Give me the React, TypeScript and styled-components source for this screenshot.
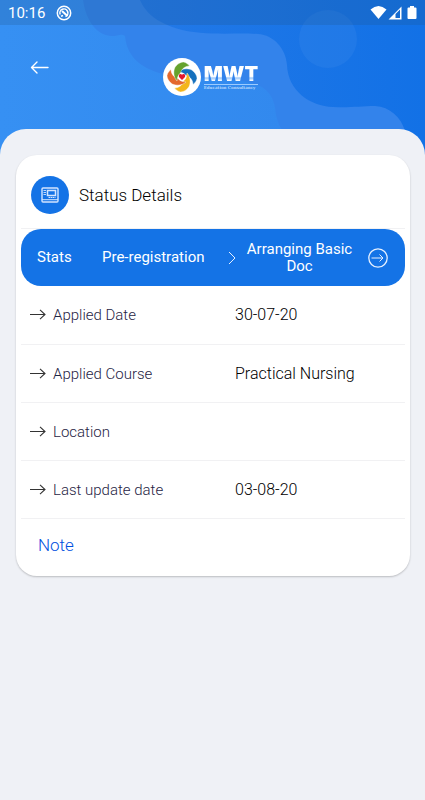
import React from "react";
import styled, { createGlobalStyle } from "styled-components";

const GlobalStyle = createGlobalStyle`
  *, *::before, *::after { box-sizing: border-box; }
  body {
    margin: 0;
    background: #eff1f6;
    font-family: Roboto, "Liberation Sans", sans-serif;
    color: #000;
  }
  button { padding: 0; border: 0; background: none; color: inherit; font: inherit; cursor: pointer; }
  svg { display: block; }
`;

const Screen = styled.div`
  min-height: 100vh;
  background: #eff1f6;
`;

const Hero = styled.header`
  position: relative;
  isolation: isolate;
  overflow: hidden;
  padding-bottom: 57px;
  color: #fff;
`;

const Backdrop = styled.svg`
  position: absolute;
  inset: 0;
  z-index: -1;
  width: 100%;
  height: 100%;
`;

const StatusBar = styled.div`
  display: flex;
  align-items: center;
  height: 25px;
  padding: 0 6px 0 8px;
  background: rgba(30, 80, 130, 0.22);
`;

const Clock = styled.time`
  margin-right: 11px;
  font-size: 15px;
  line-height: 18px;
`;

const SystemIcons = styled.div`
  display: flex;
  align-items: center;
  gap: 1px;
  margin-left: auto;
`;

const NavBar = styled.nav`
  display: grid;
  grid-template-columns: 1fr auto 1fr;
  align-items: start;
  height: 104px;
  padding: 32px 34px 0 30px;
`;

const BackButton = styled.button`
  width: 20px;
  height: 20px;
`;

const Brand = styled.div`
  display: flex;
  align-items: center;
  gap: 3px;
  padding-top: 1px;
`;

const BrandText = styled.div`
  display: flex;
  flex-direction: column;
`;

const BrandName = styled.strong`
  border-bottom: 1px solid #9ccbff;
  background: linear-gradient(#fff 62%, #9cc8fb 70%, #fff 84%);
  background-clip: text;
  -webkit-text-fill-color: transparent;
  font-family: Inter, sans-serif;
  font-size: 20px;
  font-weight: 900;
  line-height: 20px;
`;

const BrandTagline = styled.span`
  color: #b5d6fb;
  font-family: "DejaVu Serif", serif;
  font-size: 4px;
  font-weight: 700;
  line-height: 6px;
`;

const Sheet = styled.main`
  position: relative;
  margin-top: -57px;
  padding: 26px 15px 32px 16px;
  border-radius: 26px 26px 0 0;
  background: #eff1f6;
`;

const Card = styled.section`
  padding: 0 5px;
  border-radius: 21px;
  background: #fff;
  box-shadow: 0 1px 2px rgba(0, 0, 0, 0.22);
`;

const CardHeader = styled.div`
  display: flex;
  align-items: center;
  gap: 10px;
  height: 74px;
  padding: 6px 10px 0;
  border-bottom: 1px solid #f1f1f3;
`;

const RoundBadge = styled.div`
  display: grid;
  place-items: center;
  width: 38px;
  height: 38px;
  border-radius: 50%;
  background: #1473e6;
`;

const Title = styled.h1`
  margin: 0;
  font-size: 17px;
  font-weight: 300;
  line-height: 20px;
`;

const StageBar = styled.div`
  display: grid;
  grid-template-columns: 65px minmax(0, 126fr) 8px minmax(0, 132fr) 20px;
  align-items: center;
  height: 57px;
  padding: 0 17px 0 16px;
  border-radius: 20px;
  background: #1473e6;
  color: #fff;
  font-size: 15px;
  line-height: 17px;
`;

const Stage = styled.span<{ $centered?: boolean }>`
  padding: ${({ $centered }) => ($centered ? "0 13px 0 8px" : "0")};
  text-align: ${({ $centered }) => ($centered ? "center" : "left")};
`;

const NextButton = styled.button`
  width: 20px;
  height: 20px;
`;

const Details = styled.dl`
  margin: 0;
`;

const DetailRow = styled.div`
  display: grid;
  grid-template-columns: 205fr 161fr;
  align-items: center;
  height: 58px;
  padding: 0 9px;
  border-bottom: 1px solid #f1f1f3;

  &:first-child { height: 59px; }
`;

const Label = styled.dt`
  display: flex;
  align-items: center;
  gap: 7px;
  color: #1f2444;
  font-size: 15px;
  font-weight: 300;
  line-height: 18px;
`;

const Value = styled.dd`
  margin: 0;
  font-size: 16px;
  font-weight: 300;
  line-height: 18px;
`;

const NoteRow = styled.div`
  height: 57px;
  padding: 16px 17px 0;
`;

const NoteLink = styled.a`
  color: #0050e0;
  font-size: 17px;
  font-weight: 300;
  line-height: 20px;
  text-decoration: none;
`;

const rows = [
  { label: "Applied Date", value: "30-07-20" },
  { label: "Applied Course", value: "Practical Nursing" },
  { label: "Location", value: "" },
  { label: "Last update date", value: "03-08-20" },
];

const Waves = () => (
  <Backdrop viewBox="0 0 425 186" preserveAspectRatio="none" aria-hidden="true">
    <defs>
      <linearGradient id="deep" x1="0" y1="0" x2="1" y2="0">
        <stop offset="0.3" stopColor="#2379e7" />
        <stop offset="1" stopColor="#1271e6" />
      </linearGradient>
      <linearGradient id="light" x1="0" y1="0" x2="1" y2="0">
        <stop offset="0" stopColor="#3690f3" />
        <stop offset="1" stopColor="#3289ee" />
      </linearGradient>
    </defs>
    <rect width="425" height="186" fill="url(#deep)" />
    <path
      d="M0 0H140C149 22 178 33 213 33.500C230 34 243 33 258 34C274 35 286 49 287 65C288 91 310 106 333 107C350 108 360 106 375 106C390 107 401 117 405 131V186H0Z"
      fill="#3383eb"
    />
    <path
      d="M0 0H83C86 22 98 36 112 36C118 36 121 33 125 36C127 60 146 72 174 76C205 80 244 77 262 87C274 95 275 106 276 115C278 123 280 128 284 132V186H0Z"
      fill="url(#light)"
    />
    <circle cx="328" cy="39" r="29" fill="#fff" opacity="0.045" />
  </Backdrop>
);

const NotificationIcon = () => (
  <svg width="16" height="16" viewBox="0 0 16 16" fill="none" stroke="#fff" aria-hidden="true">
    <circle cx="8" cy="8" r="6.700" strokeWidth="1.500" />
    <path d="M4.200 9.500A4 4 0 1 1 9.500 11.600M5 11.300 7 10.500" strokeWidth="1.500" />
    <path d="m6 6 5.500 5" strokeWidth="2" />
  </svg>
);

const WifiIcon = () => (
  <svg width="17" height="15" viewBox="0 0 17 15" aria-label="Wi-Fi" role="img">
    <path d="M.5 4.500Q8.500-2.500 16.500 4.500L8.500 14Z" fill="#fff" />
  </svg>
);

const SignalIcon = () => (
  <svg width="16" height="14" viewBox="0 0 16 14" aria-label="Mobile signal" role="img">
    <path fill="#fff" fillRule="evenodd" d="M13.500.5V13.500H.5ZM7.500 8V12H12V3.500Z" />
  </svg>
);

const BatteryIcon = () => (
  <svg width="14" height="15" viewBox="0 0 14 15" aria-label="Battery" role="img">
    <path d="M5 2.500V1h4v1.500h1.500q1 0 1 1V13q0 1-1 1h-7q-1 0-1-1V3.500q0-1 1-1Z" fill="#fff" />
  </svg>
);

const BackIcon = () => (
  <svg width="20" height="20" viewBox="0 0 20 20" fill="none" stroke="#fff" strokeWidth="1.400" strokeLinecap="round" strokeLinejoin="round" aria-hidden="true">
    <path d="M18 10.500H1.500M7 5 1.500 10.500 7 16" />
  </svg>
);

const petals = [
  { color: "#1570bd", turn: 0 },
  { color: "#f3b61b", turn: 90 },
  { color: "#e4682d", turn: 180 },
  { color: "#66a22d", turn: 270 },
];

const Emblem = () => (
  <svg width="38" height="38" viewBox="-19 -19 38 38" aria-hidden="true">
    <circle r="19" fill="#fff" />
    {petals.map(({ color, turn }) => (
      <path
        key={turn}
        transform={`rotate(${turn})`}
        d="M-4-5C0-9 8-9 11-6 14-3.500 15-.500 15 1.500 14.500 4 13 6 11 7.500 11 3 8-.500 4-1.500 2-4-1-5-4-5Z"
        fill={color}
        stroke="#fff"
        strokeWidth="0.400"
      />
    ))}
    <circle r="3.800" fill="#fff" />
    <path d="m0 3-3-3q-.800-3 1.500-3Q-.300-3 0-2q.300-1 1.500-1 2.300 0 1.500 3Z" fill="#e3172d" />
  </svg>
);

const MonitorIcon = () => (
  <svg width="18" height="16" viewBox="0 0 18 16" fill="none" stroke="#d3e5ff" aria-hidden="true">
    <rect x="1" y="1" width="16" height="14" rx="1" strokeWidth="1.400" />
    <rect x="6.500" y="3.500" width="8" height="5" strokeWidth="1.500" />
    <path d="M2.500 3.500H5M2.500 5.500H5M2.500 7.500H5" strokeWidth="0.900" />
    <path d="M7.500 10.500h7" strokeDasharray="1.500 0.500" />
    <path d="M1 12.700h16" />
  </svg>
);

const ChevronIcon = () => (
  <svg width="8" height="14" viewBox="0 0 8 14" fill="none" stroke="#e6f0ff" aria-hidden="true">
    <path d="m1 1 6 6-6 6" />
  </svg>
);

const CircleArrowIcon = () => (
  <svg width="20" height="20" viewBox="0 0 20 20" fill="none" stroke="#e6f0ff" aria-hidden="true">
    <circle cx="10" cy="10" r="9.200" strokeWidth="1.300" />
    <path d="M3.500 10H15M11.500 6.500 15 10l-3.500 3.500" strokeWidth="1" />
  </svg>
);

const RowArrow = () => (
  <svg width="16" height="12" viewBox="0 0 16 12" fill="none" stroke="#333" strokeWidth="1.100" aria-hidden="true">
    <path d="M0 5.500H15M10 .8 15 5.500 10 10.200" />
  </svg>
);

export default function App() {
  return (
    <Screen>
      <GlobalStyle />
      <Hero>
        <Waves />
        <StatusBar>
          <Clock>10:16</Clock>
          <NotificationIcon />
          <SystemIcons>
            <WifiIcon />
            <SignalIcon />
            <BatteryIcon />
          </SystemIcons>
        </StatusBar>
        <NavBar>
          <BackButton type="button" aria-label="Back">
            <BackIcon />
          </BackButton>
          <Brand>
            <Emblem />
            <BrandText>
              <BrandName>MWT</BrandName>
              <BrandTagline>Education Consultancy</BrandTagline>
            </BrandText>
          </Brand>
        </NavBar>
      </Hero>
      <Sheet>
        <Card>
          <CardHeader>
            <RoundBadge>
              <MonitorIcon />
            </RoundBadge>
            <Title>Status Details</Title>
          </CardHeader>
          <StageBar>
            <span>Stats</span>
            <Stage>Pre-registration</Stage>
            <ChevronIcon />
            <Stage $centered>Arranging Basic Doc</Stage>
            <NextButton type="button" aria-label="Next stage">
              <CircleArrowIcon />
            </NextButton>
          </StageBar>
          <Details>
            {rows.map(({ label, value }) => (
              <DetailRow key={label}>
                <Label>
                  <RowArrow />
                  {label}
                </Label>
                <Value>{value}</Value>
              </DetailRow>
            ))}
          </Details>
          <NoteRow>
            <NoteLink href="#note">Note</NoteLink>
          </NoteRow>
        </Card>
      </Sheet>
    </Screen>
  );
}
